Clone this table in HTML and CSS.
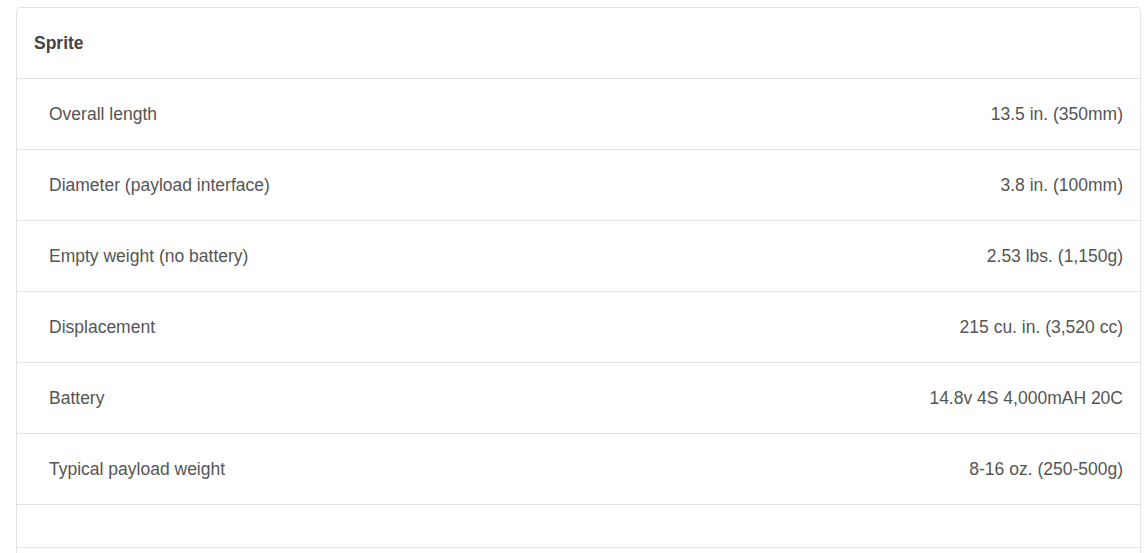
FILE: index.html
```html
<!DOCTYPE html>
<html>
<head>
<meta charset="utf-8">
<link rel="stylesheet" href="styles.css">
</head>
<body>
<div class="page">
  <div class="card">
    <div class="card-head">Sprite</div>
    <div class="spec-row"><span class="label">Overall length</span><span class="value">13.5 in. (350mm)</span></div>
    <div class="spec-row"><span class="label">Diameter (payload interface)</span><span class="value">3.8 in. (100mm)</span></div>
    <div class="spec-row"><span class="label">Empty weight (no battery)</span><span class="value">2.53 lbs. (1,150g)</span></div>
    <div class="spec-row"><span class="label">Displacement</span><span class="value">215 cu. in. (3,520 cc)</span></div>
    <div class="spec-row"><span class="label">Battery</span><span class="value">14.8v 4S 4,000mAH 20C</span></div>
    <div class="spec-row"><span class="label">Typical payload weight</span><span class="value">8-16 oz. (250-500g)</span></div>
    <div class="spec-row empty"></div>
    <div class="spec-row empty"></div>
  </div>
</div>
</body>
</html>
```
FILE: styles.css
```css
html, body {
  margin: 0;
  padding: 0;
  background: #fff;
  overflow: hidden;
}
.page {
  padding: 7px 7px 0 16px;
  font-family: "Liberation Sans", Arial, sans-serif;
  font-size: 17.5px;
  color: #555;
}
.card {
  border: 1px solid #e3e3e3;
  border-radius: 4px;
  background: #fff;
}
.card-head {
  height: 70px;
  padding: 0 17px;
  display: flex;
  align-items: center;
  font-weight: bold;
  color: #444;
  line-height: 22px;
}
.spec-row {
  display: flex;
  justify-content: space-between;
  align-items: center;
  height: 70px;
  padding: 0 17px 0 32px;
  border-top: 1px solid #e3e3e3;
  line-height: 22px;
}
.spec-row.empty {
  height: 42px;
}
```
